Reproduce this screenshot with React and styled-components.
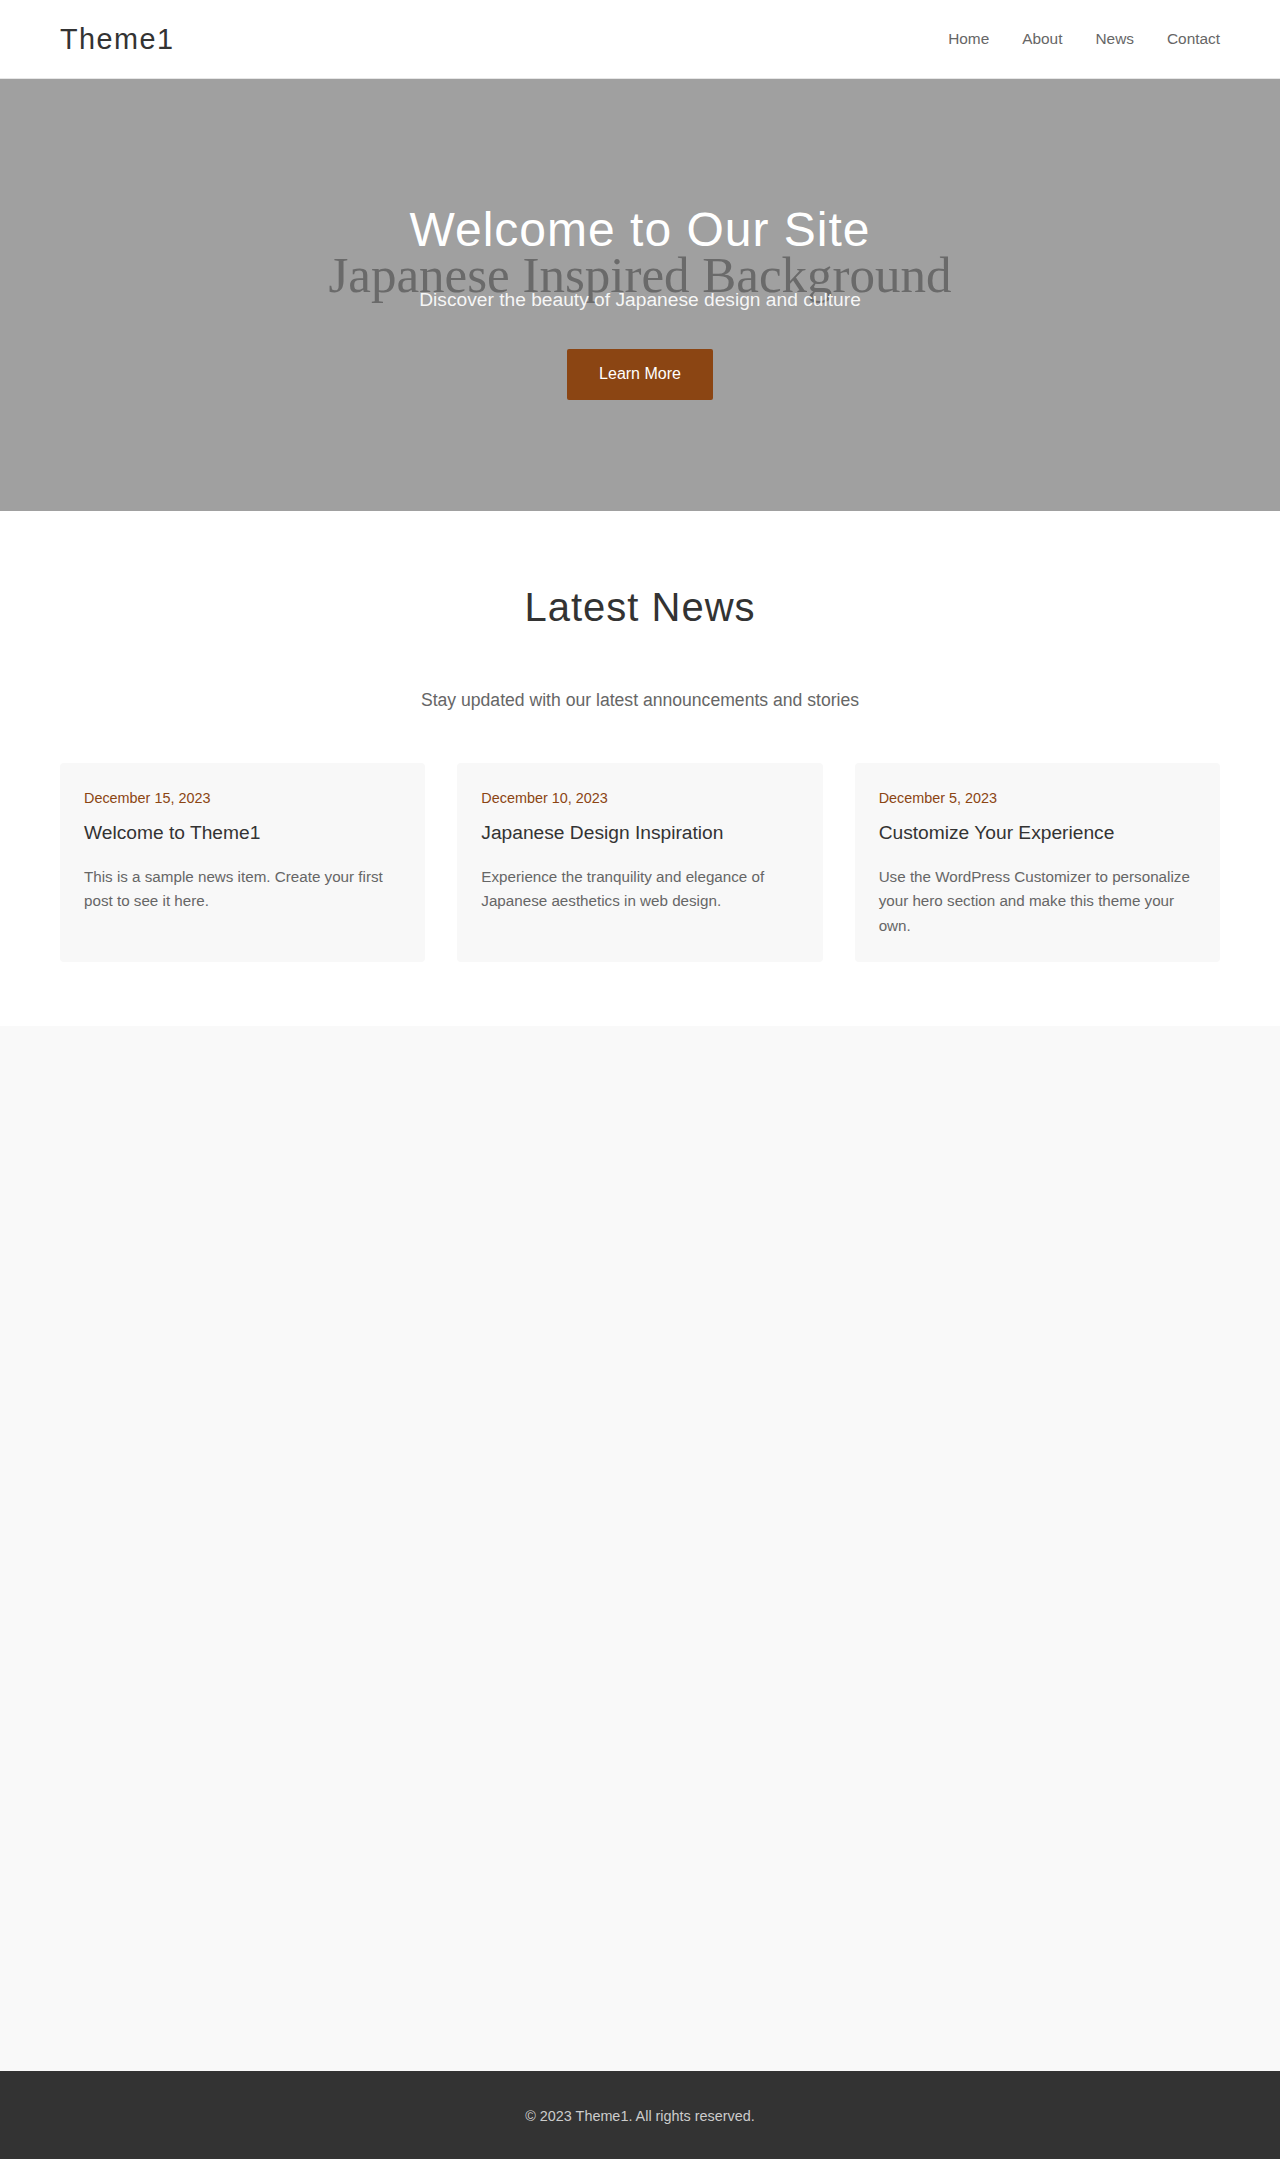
import React from "react";
import styled, { createGlobalStyle } from "styled-components";

const GlobalStyle = createGlobalStyle`
  * { box-sizing: border-box; }
  html, body { margin: 0; padding: 0; }
  body {
    font-family: "Liberation Sans", Arial, sans-serif;
    line-height: 1.6;
    color: #333;
    background: #f9f9f9;
  }
`;

const Header = styled.header`
  background: #fff;
  border-bottom: 1px solid #e6e6e6;
`;

const Container = styled.div`
  max-width: 1200px;
  margin: 0 auto;
  padding: 0 20px;
`;

const HeaderInner = styled(Container)`
  display: flex;
  align-items: center;
  justify-content: space-between;
  padding-top: 16px;
  padding-bottom: 16px;
`;

const Logo = styled.a`
  font-size: 28.8px;
  letter-spacing: 1.5px;
  color: #333;
  text-decoration: none;
  line-height: 1.6;
`;

const Nav = styled.nav`
  display: flex;
  gap: 33px;
`;

const NavLink = styled.a`
  font-size: 15.4px;
  color: #666;
  text-decoration: none;
`;

const Hero = styled.section`
  position: relative;
  background: #a0a0a0;
  height: 432px;
  padding-top: 122px;
  text-align: center;
  overflow: hidden;
`;

const HeroBgText = styled.div`
  position: absolute;
  left: 0;
  right: 0;
  top: 171px;
  z-index: 0;
  text-align: center;
  font-family: "Liberation Serif", "Times New Roman", serif;
  font-size: 51px;
  line-height: 1;
  color: #6a6a6a;
  pointer-events: none;
`;

const HeroContent = styled.div`
  position: relative;
  z-index: 1;
  display: flex;
  flex-direction: column;
  align-items: center;
`;

const HeroTitle = styled.h1`
  margin: 0 0 26px;
  font-size: 48px;
  font-weight: 400;
  line-height: 1.2;
  letter-spacing: 1px;
  color: #fff;
`;

const HeroSubtitle = styled.p`
  margin: 0 0 34px;
  font-size: 19.2px;
  line-height: 1.6;
  color: rgba(255, 255, 255, 0.92);
`;

const HeroButton = styled.a`
  display: inline-block;
  background: #8b4513;
  color: #fff;
  font-size: 16px;
  line-height: 1.15;
  padding: 16px 32px;
  border-radius: 2px;
  text-decoration: none;
`;

const NewsSection = styled.section`
  background: #fff;
  padding: 64px 0;
`;

const SectionTitle = styled.h2`
  margin: 0 0 47px;
  text-align: center;
  font-size: 40px;
  font-weight: 400;
  letter-spacing: 1px;
  line-height: 1.6;
  color: #333;
`;

const SectionSubtitle = styled.p`
  margin: 0 0 49px;
  text-align: center;
  font-size: 17.6px;
  color: #666;
`;

const CardGrid = styled.div`
  display: grid;
  grid-template-columns: repeat(3, 1fr);
  gap: 32px;
`;

const Card = styled.article`
  background: #f8f8f8;
  border-radius: 4px;
  padding: 24px;
`;

const CardDate = styled.div`
  font-size: 14.4px;
  color: #8b4513;
  margin-bottom: 8px;
`;

const CardTitle = styled.h3`
  margin: 0 0 16px;
  font-size: 19.2px;
  font-weight: 400;
  line-height: 1.6;
  color: #333;
`;

const CardText = styled.p`
  margin: 0;
  font-size: 15.2px;
  line-height: 1.6;
  color: #666;
`;

const Main = styled.main`
  background: #f9f9f9;
  min-height: 1045px;
`;

const Footer = styled.footer`
  background: #333;
  padding: 34px 0 32px;
  text-align: center;
`;

const FooterText = styled.p`
  margin: 0;
  font-size: 14.4px;
  color: #ccc;
`;

const posts = [
  {
    date: "December 15, 2023",
    title: "Welcome to Theme1",
    text: "This is a sample news item. Create your first post to see it here.",
  },
  {
    date: "December 10, 2023",
    title: "Japanese Design Inspiration",
    text: "Experience the tranquility and elegance of Japanese aesthetics in web design.",
  },
  {
    date: "December 5, 2023",
    title: "Customize Your Experience",
    text: "Use the WordPress Customizer to personalize your hero section and make this theme your own.",
  },
];

export default function App() {
  return (
    <>
      <GlobalStyle />
      <Header>
        <HeaderInner>
          <Logo href="#">Theme1</Logo>
          <Nav>
            <NavLink href="#">Home</NavLink>
            <NavLink href="#">About</NavLink>
            <NavLink href="#">News</NavLink>
            <NavLink href="#">Contact</NavLink>
          </Nav>
        </HeaderInner>
      </Header>
      <Hero>
        <HeroBgText>Japanese Inspired Background</HeroBgText>
        <HeroContent>
          <HeroTitle>Welcome to Our Site</HeroTitle>
          <HeroSubtitle>Discover the beauty of Japanese design and culture</HeroSubtitle>
          <HeroButton href="#">Learn More</HeroButton>
        </HeroContent>
      </Hero>
      <NewsSection>
        <Container>
          <SectionTitle>Latest News</SectionTitle>
          <SectionSubtitle>Stay updated with our latest announcements and stories</SectionSubtitle>
          <CardGrid>
            {posts.map((p) => (
              <Card key={p.title}>
                <CardDate>{p.date}</CardDate>
                <CardTitle>{p.title}</CardTitle>
                <CardText>{p.text}</CardText>
              </Card>
            ))}
          </CardGrid>
        </Container>
      </NewsSection>
      <Main />
      <Footer>
        <FooterText>© 2023 Theme1. All rights reserved.</FooterText>
      </Footer>
    </>
  );
}
